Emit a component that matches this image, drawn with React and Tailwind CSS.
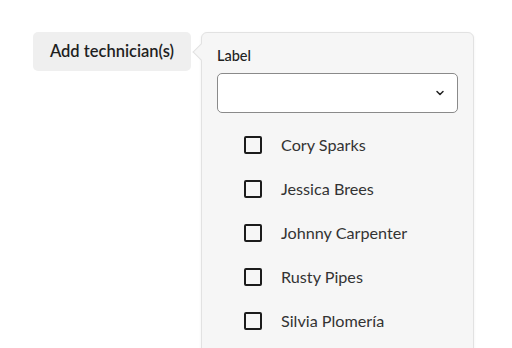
import { ChevronDown } from "lucide-react";

const techs = ["Cory Sparks", "Jessica Brees", "Johnny Carpenter", "Rusty Pipes", "Silvia Plomería"];

export default function App() {
  return (
    <div
      className="w-[512px] h-[348px] overflow-hidden bg-white flex items-start pl-[33px] pt-[32px] gap-[10px]"
      style={{ fontFamily: "Lato, 'Noto Sans', sans-serif" }}
    >
      <button className="w-[158px] h-[39px] rounded-[5px] bg-[#efefef] text-[16.5px] font-semibold text-[#1f1f1f] flex items-center justify-center">
        Add technician(s)
      </button>

      <div className="relative w-[273px] h-[340px] bg-[#f6f6f6] border border-[#e2e2e2] rounded-[6px] shadow-[0_1px_3px_rgba(0,0,0,0.06)] px-[15px] pt-[13px]">
        <div className="absolute left-[-7px] top-[13px] w-[12px] h-[12px] rotate-45 bg-[#f6f6f6] border-l border-b border-[#e2e2e2]" />
        <div className="text-[14.5px] font-medium text-[#222] leading-[20px]">Label</div>
        <div className="mt-[7px] h-[40px] bg-white border border-[#8a8a8a] rounded-[5px] flex items-center justify-end pr-[11px]">
          <ChevronDown size={12} strokeWidth={3} className="text-[#222]" />
        </div>
        <ul className="mt-[10px] pl-[27px]">
          {techs.map((t) => (
            <li key={t} className="h-[44px] flex items-center gap-[19px]">
              <span className="w-[18px] h-[18px] border-2 border-[#1c1c1c] rounded-[2px] bg-transparent" />
              <span className="text-[16.2px] text-[#333]">{t}</span>
            </li>
          ))}
        </ul>
      </div>
    </div>
  );
}
